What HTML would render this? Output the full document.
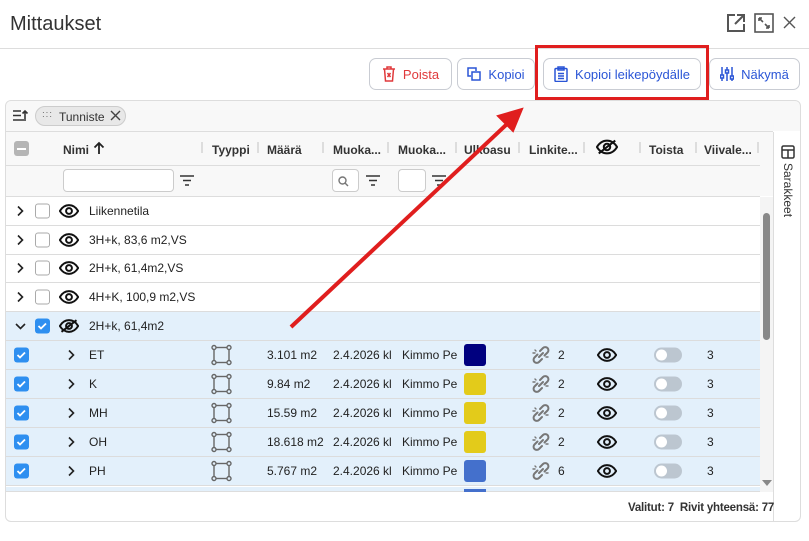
<!DOCTYPE html>
<html><head><meta charset="utf-8"><style>
*{box-sizing:border-box;margin:0;padding:0}
body{width:809px;height:541px;background:#fff;font-family:"Liberation Sans",sans-serif;position:relative;overflow:hidden;color:#222}
.a{position:absolute}
.btn{position:absolute;top:58px;height:32px;border:1px solid #c9ccd3;border-radius:7px;background:#fff;font-size:13px;color:#2a55d6;display:flex;align-items:center;justify-content:center;gap:7px}
.hd{position:absolute;top:143px;font-size:12px;font-weight:bold;color:#333}
.sep{position:absolute;top:142px;width:2px;height:11px;background:#ddd}
.row{position:absolute;left:6px;width:754px;height:29px;border-bottom:1px solid #dcdcdc;font-size:12px}
.row .a{top:50%;transform:translateY(-50%)}
.sel{background:#e3f0fb}
.cb{width:15px;height:15px;border-radius:3px}
.cbe{border:1px solid #aaa;background:#fff}
.cbc{background:#2e8ff0}
.sw{width:22px;height:22px;border-radius:3px}
.tg{width:28px;height:15px;border-radius:8px;background:#bcc6d0}
.tg:after{content:"";position:absolute;left:2px;top:2px;width:11px;height:11px;border-radius:50%;background:#fff}
</style></head><body>
<div class="a" style="left:10px;top:13px;font-size:20px;color:#333">Mittaukset</div>
<svg class="a" style="left:726px;top:13px" width="20" height="20" viewBox="0 0 20 20" fill="none" stroke="#555" stroke-width="2"><path d="M9 2H2v16h16v-7M11 2h7v7M18 2L9 11"/></svg>
<svg class="a" style="left:754px;top:13px" width="20" height="20" viewBox="0 0 20 20" fill="none" stroke="#555" stroke-width="1.6"><rect x="1" y="1" width="18" height="18"/><path d="M5 5l4 4M5 5h3M5 5v3M15 15l-4-4M15 15h-3M15 15v-3"/></svg>
<svg class="a" style="left:783px;top:16px" width="13" height="13" viewBox="0 0 13 13" stroke="#555" stroke-width="1.4"><path d="M1 1l11 11M12 1L1 12"/></svg>
<div class="a" style="left:0;top:48px;width:809px;height:1px;background:#ddd"></div>

<div class="btn" style="left:369px;width:83px;color:#e0393b"><svg width="14" height="16" viewBox="0 0 14 16" fill="none" stroke="#e0393b" stroke-width="1.5"><path d="M1 3h12M5 3V1h4v2M2.5 3l1 12h7l1-12M5.5 7l3 4M8.5 7l-3 4"/></svg>Poista</div>
<div class="btn" style="left:457px;width:78px"><svg width="14" height="14" viewBox="0 0 14 14" fill="none" stroke="#2a55d6" stroke-width="1.5"><path d="M9 4V1H1v8h3"/><rect x="5" y="5" width="8" height="8"/></svg>Kopioi</div>
<div class="btn" style="left:543px;width:158px"><svg width="14" height="16" viewBox="0 0 14 16" fill="none" stroke="#2a55d6" stroke-width="1.5"><rect x="1" y="2.5" width="12" height="13" rx="1"/><rect x="4" y="1" width="6" height="3"/><path d="M4 7.5h6M4 10h6M4 12.5h6"/></svg>Kopioi leikepöydälle</div>
<div class="btn" style="left:709px;width:91px"><svg width="14" height="16" viewBox="0 0 14 16" fill="none" stroke="#2a55d6" stroke-width="1.5"><path d="M2 1v14M7 1v14M12 1v14"/><rect x="0.5" y="9" width="3" height="3" fill="#fff"/><rect x="5.5" y="4" width="3" height="3" fill="#fff"/><rect x="10.5" y="10" width="3" height="3" fill="#fff"/></svg>Näkymä</div>
<div class="a" style="left:535px;top:45px;width:174px;height:55px;border:3px solid #e01e1e"></div>

<div class="a" style="left:6px;top:132px;width:767px;height:64px;background:#f8f8f8"></div>
<div class="a" style="left:6px;top:101px;width:794px;height:30px;background:#f8f8f8;border-radius:6px 6px 0 0"></div>
<div class="a" style="left:6px;top:131px;width:767px;height:1px;background:#ddd"></div>
<div class="a" style="left:6px;top:165px;width:754px;height:1px;background:#ddd"></div>
<div class="a" style="left:6px;top:196px;width:754px;height:1px;background:#ddd"></div>
<svg class="a" style="left:13px;top:109px" width="16" height="13" viewBox="0 0 16 13" stroke="#333" stroke-width="1.6" fill="none"><path d="M0 2h8M0 6.5h8M0 11h13M12 10V2M9.5 4.5L12 2l2.5 2.5"/></svg>
<div class="a" style="left:35px;top:106px;width:91px;height:20px;border:1px solid #ccc;border-radius:10px;background:#e8e8e8;font-size:12px;padding:3px 0 0 23px;color:#333">Tunniste</div>
<div class="a" style="left:42px;top:111px;font-size:8px;letter-spacing:1px;color:#444;line-height:4px">···<br>···</div>
<svg class="a" style="left:110px;top:110px" width="11" height="11" stroke="#444" stroke-width="1.4"><path d="M1 1l9 9M10 1L1 10"/></svg>

<div class="a" style="left:773px;top:132px;width:1px;height:389px;background:#ddd"></div>
<div class="a" style="left:774px;top:132px;width:26px;height:389px;background:#fff"></div>
<svg class="a" style="left:781px;top:145px" width="14" height="14" viewBox="0 0 14 14" fill="none" stroke="#333" stroke-width="1.5"><rect x="1" y="1" width="12" height="12" rx="1.5"/><path d="M1 5h12M7 5v8"/></svg>
<div class="a" style="left:781px;top:163px;font-size:12px;writing-mode:vertical-rl;color:#333">Sarakkeet</div>

<div class="a cb" style="left:14px;top:141px;background:#b5b5b5"><div class="a" style="left:3px;top:6.5px;width:9px;height:2px;background:#fff"></div></div>
<div class="hd" style="left:63px">Nimi</div>
<svg class="a" style="left:93px;top:141px" width="12" height="13" stroke="#222" stroke-width="1.8" fill="none"><path d="M6 13V2M1.5 6.5L6 2l4.5 4.5"/></svg>
<div class="sep" style="left:201px"></div><div class="hd" style="left:212px">Tyyppi</div>
<div class="sep" style="left:257px"></div><div class="hd" style="left:267px">Määrä</div>
<div class="sep" style="left:322px"></div><div class="hd" style="left:333px">Muoka...</div>
<div class="sep" style="left:387px"></div><div class="hd" style="left:398px">Muoka...</div>
<div class="sep" style="left:455px"></div><div class="hd" style="left:464px">Ulkoasu</div>
<div class="sep" style="left:518px"></div><div class="hd" style="left:529px">Linkite...</div>
<div class="sep" style="left:583px"></div>
<svg class="a" style="left:596px;top:139px" width="22" height="16" viewBox="0 0 24 16" fill="none" stroke="#111" stroke-width="2.2"><path d="M1 8c3-5 7-7 11-7s8 2 11 7c-3 5-7 7-11 7S4 13 1 8z"/><circle cx="12" cy="8" r="3.5"/><path d="M3 15L21 1"/></svg>
<div class="sep" style="left:639px"></div><div class="hd" style="left:649px">Toista</div>
<div class="sep" style="left:695px"></div><div class="hd" style="left:704px">Viivale...</div>
<div class="sep" style="left:757px"></div>

<div class="a" style="left:63px;top:169px;width:111px;height:23px;border:1px solid #ccc;border-radius:4px;background:#fff"></div>
<div class="a" style="left:332px;top:169px;width:27px;height:23px;border:1px solid #ccc;border-radius:4px;background:#fff"><svg class="a" style="left:5px;top:6px" width="11" height="11" fill="none" stroke="#777" stroke-width="1.4"><circle cx="4.5" cy="4.5" r="3.5"/><path d="M7 7l3 3"/></svg></div>
<div class="a" style="left:398px;top:169px;width:28px;height:23px;border:1px solid #ccc;border-radius:4px;background:#fff"></div>
<svg class="a" style="left:180px;top:175px" width="14" height="11" stroke="#333" stroke-width="1.6"><path d="M0 1h14M3 5.5h8M5 10h4"/></svg>
<svg class="a" style="left:366px;top:175px" width="14" height="11" stroke="#333" stroke-width="1.6"><path d="M0 1h14M3 5.5h8M5 10h4"/></svg>
<svg class="a" style="left:432px;top:175px" width="14" height="11" stroke="#333" stroke-width="1.6"><path d="M0 1h14M3 5.5h8M5 10h4"/></svg>

<div class="row" style="top:197px">
<svg class="a" style="left:10px" width="8" height="11" stroke="#222" stroke-width="1.6" fill="none"><path d="M2 1l4.5 4.5L2 10"/></svg>
<div class="a cb cbe" style="left:29px"></div>
<svg class="a" style="left:53px" width="20" height="14" viewBox="0 0 24 16" fill="none" stroke="#111" stroke-width="2.4"><path d="M1 8c3-5 7-7 11-7s8 2 11 7c-3 5-7 7-11 7S4 13 1 8z"/><circle cx="12" cy="8" r="3.5"/></svg>
<span class="a" style="left:83px">Liikennetila</span></div>
<div class="row" style="top:226px">
<svg class="a" style="left:10px" width="8" height="11" stroke="#222" stroke-width="1.6" fill="none"><path d="M2 1l4.5 4.5L2 10"/></svg>
<div class="a cb cbe" style="left:29px"></div>
<svg class="a" style="left:53px" width="20" height="14" viewBox="0 0 24 16" fill="none" stroke="#111" stroke-width="2.4"><path d="M1 8c3-5 7-7 11-7s8 2 11 7c-3 5-7 7-11 7S4 13 1 8z"/><circle cx="12" cy="8" r="3.5"/></svg>
<span class="a" style="left:83px">3H+k, 83,6 m2,VS</span></div>
<div class="row" style="top:254px">
<svg class="a" style="left:10px" width="8" height="11" stroke="#222" stroke-width="1.6" fill="none"><path d="M2 1l4.5 4.5L2 10"/></svg>
<div class="a cb cbe" style="left:29px"></div>
<svg class="a" style="left:53px" width="20" height="14" viewBox="0 0 24 16" fill="none" stroke="#111" stroke-width="2.4"><path d="M1 8c3-5 7-7 11-7s8 2 11 7c-3 5-7 7-11 7S4 13 1 8z"/><circle cx="12" cy="8" r="3.5"/></svg>
<span class="a" style="left:83px">2H+k, 61,4m2,VS</span></div>
<div class="row" style="top:283px">
<svg class="a" style="left:10px" width="8" height="11" stroke="#222" stroke-width="1.6" fill="none"><path d="M2 1l4.5 4.5L2 10"/></svg>
<div class="a cb cbe" style="left:29px"></div>
<svg class="a" style="left:53px" width="20" height="14" viewBox="0 0 24 16" fill="none" stroke="#111" stroke-width="2.4"><path d="M1 8c3-5 7-7 11-7s8 2 11 7c-3 5-7 7-11 7S4 13 1 8z"/><circle cx="12" cy="8" r="3.5"/></svg>
<span class="a" style="left:83px">4H+K, 100,9 m2,VS</span></div>
<div class="row sel" style="top:312px">
<svg class="a" style="left:9px" width="11" height="8" stroke="#222" stroke-width="1.6" fill="none"><path d="M1 2l4.5 4.5L10 2"/></svg>
<div class="a cb cbc" style="left:29px"><svg width="15" height="15" stroke="#fff" stroke-width="1.8" fill="none"><path d="M3.5 7.5l2.5 2.5 5-5"/></svg></div>
<svg class="a" style="left:53px" width="20" height="16" viewBox="0 0 24 16" fill="none" stroke="#111" stroke-width="2.4"><path d="M1 8c3-5 7-7 11-7s8 2 11 7c-3 5-7 7-11 7S4 13 1 8z"/><circle cx="12" cy="8" r="3.5"/><path d="M3 15L21 1"/></svg>
<span class="a" style="left:83px">2H+k, 61,4m2</span></div>

<div class="row sel" style="top:341px"><div class="a cb cbc" style="left:8px"><svg width="15" height="15" stroke="#fff" stroke-width="1.8" fill="none"><path d="M3.5 7.5l2.5 2.5 5-5"/></svg></div>
<svg class="a" style="left:61px" width="8" height="11" stroke="#222" stroke-width="1.6" fill="none"><path d="M2 1l4.5 4.5L2 10"/></svg><span class="a" style="left:83px">ET</span>
<svg class="a" style="left:205px" width="21" height="21" fill="none" stroke="#666" stroke-width="1.4"><rect x="3" y="3" width="15" height="15"/><circle cx="3" cy="3" r="2" fill="#e3f0fb"/><circle cx="18" cy="3" r="2" fill="#e3f0fb"/><circle cx="3" cy="18" r="2" fill="#e3f0fb"/><circle cx="18" cy="18" r="2" fill="#e3f0fb"/></svg>
<span class="a" style="left:261px">3.101 m2</span><span class="a" style="left:327px">2.4.2026 kl</span><span class="a" style="left:396px">Kimmo Pe</span>
<div class="a sw" style="left:458px;background:#00007f"></div>
<svg class="a" style="left:525px" width="20" height="20" viewBox="0 0 20 20" fill="none" stroke="#777" stroke-width="2" stroke-linecap="round"><path d="M9 6l3-3a3 3 0 0 1 4.5 4.5l-3 3M11 14l-3 3a3 3 0 0 1-4.5-4.5l3-3M8 12l4-4"/><path d="M2 8h2M4 5l1 1M15 12h2" stroke-width="1.4"/></svg><span class="a" style="left:552px">2</span>
<svg class="a" style="left:591px" width="20" height="14" viewBox="0 0 24 16" fill="none" stroke="#111" stroke-width="2.4"><path d="M1 8c3-5 7-7 11-7s8 2 11 7c-3 5-7 7-11 7S4 13 1 8z"/><circle cx="12" cy="8" r="3.5"/></svg>
<div class="a tg" style="left:648px"></div><span class="a" style="left:701px">3</span></div>

<div class="row sel" style="top:370px"><div class="a cb cbc" style="left:8px"><svg width="15" height="15" stroke="#fff" stroke-width="1.8" fill="none"><path d="M3.5 7.5l2.5 2.5 5-5"/></svg></div>
<svg class="a" style="left:61px" width="8" height="11" stroke="#222" stroke-width="1.6" fill="none"><path d="M2 1l4.5 4.5L2 10"/></svg><span class="a" style="left:83px">K</span>
<svg class="a" style="left:205px" width="21" height="21" fill="none" stroke="#666" stroke-width="1.4"><rect x="3" y="3" width="15" height="15"/><circle cx="3" cy="3" r="2" fill="#e3f0fb"/><circle cx="18" cy="3" r="2" fill="#e3f0fb"/><circle cx="3" cy="18" r="2" fill="#e3f0fb"/><circle cx="18" cy="18" r="2" fill="#e3f0fb"/></svg>
<span class="a" style="left:261px">9.84 m2</span><span class="a" style="left:327px">2.4.2026 kl</span><span class="a" style="left:396px">Kimmo Pe</span>
<div class="a sw" style="left:458px;background:#e3cb1a"></div>
<svg class="a" style="left:525px" width="20" height="20" viewBox="0 0 20 20" fill="none" stroke="#777" stroke-width="2" stroke-linecap="round"><path d="M9 6l3-3a3 3 0 0 1 4.5 4.5l-3 3M11 14l-3 3a3 3 0 0 1-4.5-4.5l3-3M8 12l4-4"/><path d="M2 8h2M4 5l1 1M15 12h2" stroke-width="1.4"/></svg><span class="a" style="left:552px">2</span>
<svg class="a" style="left:591px" width="20" height="14" viewBox="0 0 24 16" fill="none" stroke="#111" stroke-width="2.4"><path d="M1 8c3-5 7-7 11-7s8 2 11 7c-3 5-7 7-11 7S4 13 1 8z"/><circle cx="12" cy="8" r="3.5"/></svg>
<div class="a tg" style="left:648px"></div><span class="a" style="left:701px">3</span></div>

<div class="row sel" style="top:399px"><div class="a cb cbc" style="left:8px"><svg width="15" height="15" stroke="#fff" stroke-width="1.8" fill="none"><path d="M3.5 7.5l2.5 2.5 5-5"/></svg></div>
<svg class="a" style="left:61px" width="8" height="11" stroke="#222" stroke-width="1.6" fill="none"><path d="M2 1l4.5 4.5L2 10"/></svg><span class="a" style="left:83px">MH</span>
<svg class="a" style="left:205px" width="21" height="21" fill="none" stroke="#666" stroke-width="1.4"><rect x="3" y="3" width="15" height="15"/><circle cx="3" cy="3" r="2" fill="#e3f0fb"/><circle cx="18" cy="3" r="2" fill="#e3f0fb"/><circle cx="3" cy="18" r="2" fill="#e3f0fb"/><circle cx="18" cy="18" r="2" fill="#e3f0fb"/></svg>
<span class="a" style="left:261px">15.59 m2</span><span class="a" style="left:327px">2.4.2026 kl</span><span class="a" style="left:396px">Kimmo Pe</span>
<div class="a sw" style="left:458px;background:#e3cb1a"></div>
<svg class="a" style="left:525px" width="20" height="20" viewBox="0 0 20 20" fill="none" stroke="#777" stroke-width="2" stroke-linecap="round"><path d="M9 6l3-3a3 3 0 0 1 4.5 4.5l-3 3M11 14l-3 3a3 3 0 0 1-4.5-4.5l3-3M8 12l4-4"/><path d="M2 8h2M4 5l1 1M15 12h2" stroke-width="1.4"/></svg><span class="a" style="left:552px">2</span>
<svg class="a" style="left:591px" width="20" height="14" viewBox="0 0 24 16" fill="none" stroke="#111" stroke-width="2.4"><path d="M1 8c3-5 7-7 11-7s8 2 11 7c-3 5-7 7-11 7S4 13 1 8z"/><circle cx="12" cy="8" r="3.5"/></svg>
<div class="a tg" style="left:648px"></div><span class="a" style="left:701px">3</span></div>

<div class="row sel" style="top:428px"><div class="a cb cbc" style="left:8px"><svg width="15" height="15" stroke="#fff" stroke-width="1.8" fill="none"><path d="M3.5 7.5l2.5 2.5 5-5"/></svg></div>
<svg class="a" style="left:61px" width="8" height="11" stroke="#222" stroke-width="1.6" fill="none"><path d="M2 1l4.5 4.5L2 10"/></svg><span class="a" style="left:83px">OH</span>
<svg class="a" style="left:205px" width="21" height="21" fill="none" stroke="#666" stroke-width="1.4"><rect x="3" y="3" width="15" height="15"/><circle cx="3" cy="3" r="2" fill="#e3f0fb"/><circle cx="18" cy="3" r="2" fill="#e3f0fb"/><circle cx="3" cy="18" r="2" fill="#e3f0fb"/><circle cx="18" cy="18" r="2" fill="#e3f0fb"/></svg>
<span class="a" style="left:261px">18.618 m2</span><span class="a" style="left:327px">2.4.2026 kl</span><span class="a" style="left:396px">Kimmo Pe</span>
<div class="a sw" style="left:458px;background:#e3cb1a"></div>
<svg class="a" style="left:525px" width="20" height="20" viewBox="0 0 20 20" fill="none" stroke="#777" stroke-width="2" stroke-linecap="round"><path d="M9 6l3-3a3 3 0 0 1 4.5 4.5l-3 3M11 14l-3 3a3 3 0 0 1-4.5-4.5l3-3M8 12l4-4"/><path d="M2 8h2M4 5l1 1M15 12h2" stroke-width="1.4"/></svg><span class="a" style="left:552px">2</span>
<svg class="a" style="left:591px" width="20" height="14" viewBox="0 0 24 16" fill="none" stroke="#111" stroke-width="2.4"><path d="M1 8c3-5 7-7 11-7s8 2 11 7c-3 5-7 7-11 7S4 13 1 8z"/><circle cx="12" cy="8" r="3.5"/></svg>
<div class="a tg" style="left:648px"></div><span class="a" style="left:701px">3</span></div>

<div class="row sel" style="top:457px"><div class="a cb cbc" style="left:8px"><svg width="15" height="15" stroke="#fff" stroke-width="1.8" fill="none"><path d="M3.5 7.5l2.5 2.5 5-5"/></svg></div>
<svg class="a" style="left:61px" width="8" height="11" stroke="#222" stroke-width="1.6" fill="none"><path d="M2 1l4.5 4.5L2 10"/></svg><span class="a" style="left:83px">PH</span>
<svg class="a" style="left:205px" width="21" height="21" fill="none" stroke="#666" stroke-width="1.4"><rect x="3" y="3" width="15" height="15"/><circle cx="3" cy="3" r="2" fill="#e3f0fb"/><circle cx="18" cy="3" r="2" fill="#e3f0fb"/><circle cx="3" cy="18" r="2" fill="#e3f0fb"/><circle cx="18" cy="18" r="2" fill="#e3f0fb"/></svg>
<span class="a" style="left:261px">5.767 m2</span><span class="a" style="left:327px">2.4.2026 kl</span><span class="a" style="left:396px">Kimmo Pe</span>
<div class="a sw" style="left:458px;background:#4470cc"></div>
<svg class="a" style="left:525px" width="20" height="20" viewBox="0 0 20 20" fill="none" stroke="#777" stroke-width="2" stroke-linecap="round"><path d="M9 6l3-3a3 3 0 0 1 4.5 4.5l-3 3M11 14l-3 3a3 3 0 0 1-4.5-4.5l3-3M8 12l4-4"/><path d="M2 8h2M4 5l1 1M15 12h2" stroke-width="1.4"/></svg><span class="a" style="left:552px">6</span>
<svg class="a" style="left:591px" width="20" height="14" viewBox="0 0 24 16" fill="none" stroke="#111" stroke-width="2.4"><path d="M1 8c3-5 7-7 11-7s8 2 11 7c-3 5-7 7-11 7S4 13 1 8z"/><circle cx="12" cy="8" r="3.5"/></svg>
<div class="a tg" style="left:648px"></div><span class="a" style="left:701px">3</span></div>

<div class="a" style="left:6px;top:487px;width:754px;height:5px;background:#e3f0fb;border-bottom:1px solid #ddd"></div>
<div class="a" style="left:464px;top:489px;width:22px;height:3px;background:#4470cc"></div>

<div class="a" style="left:760px;top:197px;width:13px;height:295px;background:#f4f4f4"></div>
<div class="a" style="left:763px;top:213px;width:7px;height:127px;background:#888;border-radius:4px"></div>
<div class="a" style="left:762px;top:480px;width:0;height:0;border-left:5px solid transparent;border-right:5px solid transparent;border-top:6px solid #888"></div>

<div class="a" style="left:5px;top:100px;width:796px;height:422px;border:1px solid #ddd;border-radius:6px"></div>

<div class="a" style="left:628px;top:502px;font-size:11.5px;font-weight:bold;color:#333;letter-spacing:-0.2px">Valitut: 7&nbsp; Rivit yhteensä: 77</div>

<svg class="a" style="left:0;top:0" width="809" height="541"><line x1="291" y1="327" x2="506" y2="125" stroke="#e01e1e" stroke-width="4"/><polygon points="522,109 498,116 513,131" fill="#e01e1e" stroke="#e01e1e" stroke-width="2"/></svg>
</body></html>
